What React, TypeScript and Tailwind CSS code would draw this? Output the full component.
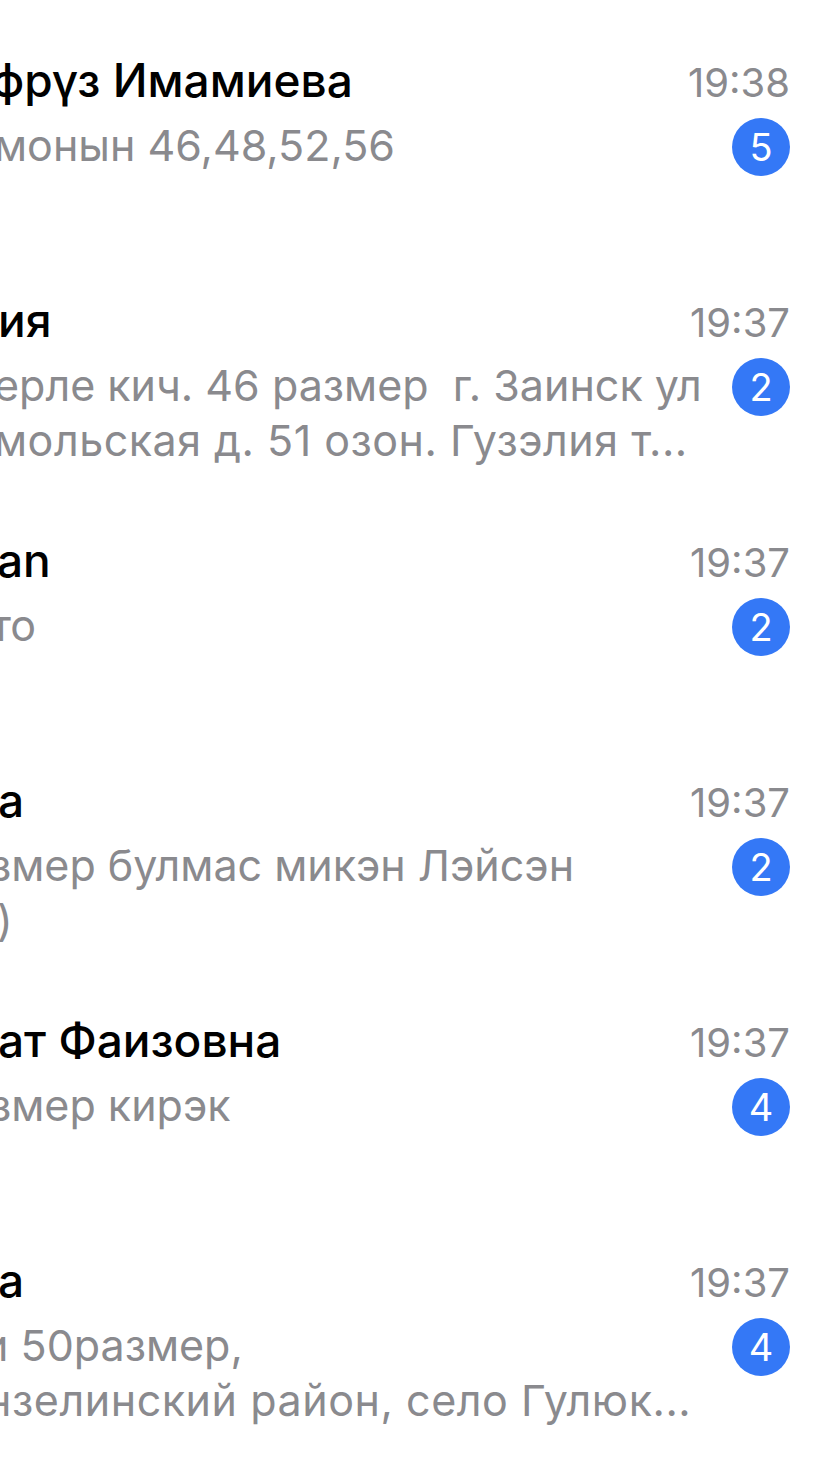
import React from 'react';

interface Line {
  text: string;
  shift: string;
}

interface Chat {
  id: number;
  name: string;
  nameShift: string;
  lines: Line[];
  time: string;
  unread: number;
}

const chats: Chat[] = [
  { id: 1, name: 'фрүз Имамиева', nameShift: 'ml-[-9px]', lines: [{ text: 'монын 46,48,52,56', shift: 'ml-[-6px]' }], time: '19:38', unread: 5 },
  {
    id: 2,
    name: 'ия',
    nameShift: 'ml-[-2px]',
    lines: [
      { text: 'ерле кич. 46 размер  г. Заинск ул', shift: 'ml-[-6px]' },
      { text: 'мольская д. 51 озон. Гузэлия т...', shift: 'ml-[-6px] tracking-[0.5px]' },
    ],
    time: '19:37',
    unread: 2,
  },
  { id: 3, name: 'an', nameShift: 'ml-[-3px]', lines: [{ text: 'то', shift: 'ml-[-9px]' }], time: '19:37', unread: 2 },
  {
    id: 4,
    name: 'а',
    nameShift: 'ml-[-2px]',
    lines: [
      { text: 'змер булмас микэн Лэйсэн', shift: 'ml-[-10px]' },
      { text: ')', shift: 'ml-[-3px]' },
    ],
    time: '19:37',
    unread: 2,
  },
  { id: 5, name: 'ат Фаизовна', nameShift: 'ml-[-2px]', lines: [{ text: 'змер кирэк', shift: 'ml-[-10px]' }], time: '19:37', unread: 4 },
  {
    id: 6,
    name: 'а',
    nameShift: 'ml-[-2px]',
    lines: [
      { text: 'и 50размер,', shift: 'ml-[-17px]' },
      { text: 'нзелинский район, село Гулюк...', shift: 'ml-[-14px] tracking-[0.55px]' },
    ],
    time: '19:37',
    unread: 4,
  },
];

const ChatRow = ({ chat }: { chat: Chat }) => (
  <div className="h-[240px] pt-[52px] pr-[37px] flex flex-col overflow-hidden">
    <div className="flex items-baseline justify-between">
      <span className={`${chat.nameShift} text-[46px] leading-[56px] font-medium text-black whitespace-nowrap`}>
        {chat.name}
      </span>
      <span className="text-[40px] leading-[56px] text-[#8a8a8e]">{chat.time}</span>
    </div>
    <div className="mt-[7px] flex items-start justify-between">
      <div className="text-[43px] leading-[55px] text-[#8a8a8e] whitespace-pre">
        {chat.lines.map((line) => (
          <div key={line.text} className={line.shift}>
            {line.text}
          </div>
        ))}
      </div>
      <div className="shrink-0 w-[58px] h-[58px] rounded-full bg-[#3478f6] text-white flex items-center justify-center text-[38px] leading-none">
        {chat.unread}
      </div>
    </div>
  </div>
);

export default function App() {
  return (
    <div className="w-[827px] h-[1472px] bg-white overflow-hidden font-['Inter',sans-serif]">
      {chats.map((chat) => (
        <ChatRow key={chat.id} chat={chat} />
      ))}
    </div>
  );
}
